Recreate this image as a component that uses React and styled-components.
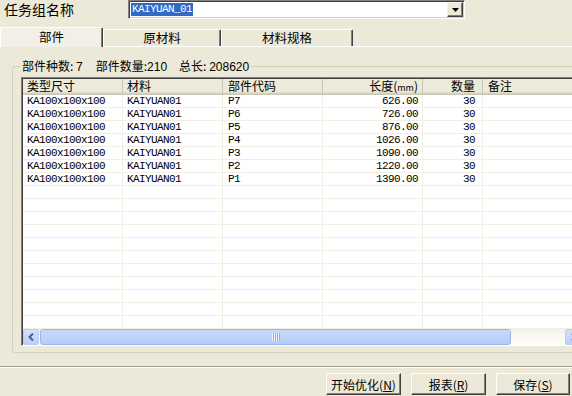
import React from "react";
import styled, { createGlobalStyle } from "styled-components";

const CJK = `"Noto Sans CJK SC", "Liberation Sans", sans-serif`;
const MONO = `"Liberation Mono", "Noto Sans CJK SC", monospace`;

const GlobalStyle = createGlobalStyle`
  html, body {
    margin: 0;
    padding: 0;
    background: #ece9d8;
  }
  body {
    font-family: ${CJK};
    font-size: 12px;
    color: #000;
  }
`;

const Window = styled.div`
  width: 572px;
  height: 396px;
  overflow: hidden;
  display: flex;
  flex-direction: column;
  background: #ece9d8;
`;

const TopRow = styled.div`
  display: flex;
  align-items: flex-start;
  height: 20px;
  flex: none;
`;

const FieldLabel = styled.div`
  width: 128px;
  padding: 1px 0 0 4px;
  box-sizing: border-box;
  font-size: 14px;
  line-height: 17px;
`;

const Combo = styled.div`
  width: 337px;
  height: 19px;
  box-sizing: border-box;
  background: #fff;
  border: 1px solid;
  border-color: #808080 #fff #fff #808080;
  box-shadow: inset 1px 1px #404040, inset -1px -1px #d4d0c8;
  display: flex;
  align-items: center;
  padding: 0 1px 0 2px;
`;

const Selected = styled.span`
  background: #316ac5;
  color: #fff;
  font-family: ${MONO};
  font-size: 11px;
  letter-spacing: -0.6px;
  line-height: 13px;
  padding: 0 1px;
`;

const DropButton = styled.div`
  margin-left: auto;
  width: 16px;
  height: 15px;
  box-sizing: border-box;
  background: #ece9d8;
  border: 1px solid;
  border-color: #f4f3ee #404040 #404040 #f4f3ee;
  box-shadow: inset -1px -1px #808080;
  display: flex;
  align-items: center;
  justify-content: center;
`;

const TabStrip = styled.div`
  display: flex;
  align-items: flex-end;
  height: 20px;
  flex: none;
  margin-top: 6px;
  position: relative;
  z-index: 1;
`;

const Tab = styled.div`
  width: ${(p) => p.$w}px;
  height: ${(p) => (p.$active ? 20 : 17)}px;
  box-sizing: border-box;
  background: ${(p) => (p.$active ? "#f1efe6" : "#ece9d8")};
  border-top: 1px solid #fff;
  border-left: 1px solid #fff;
  border-right: 1px solid #404040;
  box-shadow: inset -1px 0 #808080;
  border-radius: 2px 2px 0 0;
  margin-bottom: ${(p) => (p.$active ? -1 : 0)}px;
  text-align: center;
  font-size: 12.5px;
  line-height: ${(p) => (p.$active ? 18 : 15)}px;
`;

const TabPanel = styled.div`
  flex: 1;
  min-height: 0;
  border-top: 1px solid #fff;
  padding: 12px 0 13px 12px;
  overflow: hidden;
`;

const GroupBox = styled.fieldset`
  margin: 0;
  padding: 3px 0 6px 8px;
  width: 600px;
  height: 100%;
  box-sizing: border-box;
  border: 1px solid #d0d0bf;
  border-radius: 3px;
  display: flex;
  flex-direction: column;
  min-width: 0;
`;

const Summary = styled.legend`
  margin-left: -1px;
  padding: 0 2px;
  font-size: 12px;
  line-height: 14px;
  white-space: pre;
  display: flex;
`;

const Stat = styled.span`
  margin-right: ${(p) => p.$gap}px;
`;

const Num = styled.span`
  font-family: "Liberation Sans", sans-serif;
  font-size: 12px;
`;

const ListView = styled.div`
  flex: 1;
  min-height: 0;
  width: 558px;
  display: flex;
  flex-direction: column;
  background: #fff;
  border: 1px solid;
  border-color: #808080 #fff #fff #808080;
  box-shadow: inset 1px 1px #404040;
  padding: 1px 0 0 1px;
  overflow: hidden;
`;

const HeaderRow = styled.div`
  display: flex;
  height: 16px;
  flex: none;
  background: #ebeadb;
  box-shadow: inset 0 -1px #cbc7b8, inset 0 -2px #d6d2c2, inset 0 -3px #e2decd;
`;

const HeaderCell = styled.div`
  width: ${(p) => p.$w}px;
  flex: none;
  box-sizing: border-box;
  padding: 0 ${(p) => p.$pr}px 0 ${(p) => p.$pl}px;
  text-align: ${(p) => p.$align};
  border-right: 1px solid #c7c5b2;
  font-size: 12px;
  line-height: 14px;
  white-space: nowrap;
`;

const Small = styled.span`
  font-size: 9px;
`;

const Body = styled.div`
  flex: 1;
  min-height: 0;
  overflow: hidden;
`;

const Row = styled.div`
  display: flex;
  height: 13px;
  box-sizing: border-box;
  border-bottom: 1px solid #f1efe2;
`;

const Cell = styled.div`
  width: ${(p) => p.$w}px;
  flex: none;
  box-sizing: border-box;
  padding: 0 ${(p) => p.$pr}px 0 ${(p) => p.$pl}px;
  text-align: ${(p) => p.$align};
  border-right: 1px solid #f1efe2;
  font-family: ${MONO};
  font-size: 11px;
  letter-spacing: -0.6px;
  line-height: 12px;
  white-space: nowrap;
  overflow: hidden;
`;

const ScrollBar = styled.div`
  display: flex;
  height: 16px;
  flex: none;
  background: linear-gradient(#f3f1ec, #fefefb);
`;

const ArrowButton = styled.div`
  width: 16px;
  height: 16px;
  box-sizing: border-box;
  flex: none;
  border: 1px solid #b8ccf6;
  border-radius: 2px;
  background: linear-gradient(#d3e0fd, #bccffa);
  display: flex;
  align-items: center;
  justify-content: center;
`;

const Thumb = styled.div`
  width: ${(p) => p.$w}px;
  margin-left: 1px;
  height: 16px;
  box-sizing: border-box;
  border: 1px solid #99b5f2;
  border-radius: 3px;
  background: linear-gradient(#c9d9fc, #b6cbf8);
  display: flex;
  align-items: center;
  justify-content: center;
  flex: none;
`;

const Track = styled.div`
  flex: 1;
`;

const Footer = styled.div`
  flex: none;
  height: 30px;
  box-sizing: border-box;
  border-top: 1px solid #9d9b90;
  box-shadow: inset 0 1px #fff;
  display: flex;
  justify-content: flex-end;
  align-items: flex-start;
  gap: 10px;
  padding: 6px 2px 0 0;
`;

const Button = styled.button`
  width: ${(p) => p.$w}px;
  height: 22px;
  box-sizing: border-box;
  background: #ece9d8;
  border: 1px solid;
  border-color: #fff #404040 #404040 #fff;
  box-shadow: inset -1px -1px #808080;
  font-family: ${CJK};
  font-size: 12px;
  color: #000;
  padding: 0;
  u {
    text-underline-offset: 1px;
  }
`;

const columns = [
  { key: "type", label: "类型尺寸", w: 100, align: "left", pl: 4, pr: 2 },
  { key: "mat", label: "材料", w: 100, align: "left", pl: 4, pr: 2 },
  { key: "code", label: "部件代码", w: 100, align: "left", pl: 5, pr: 2 },
  {
    key: "len",
    label: (
      <>
        长度(<Small>mm</Small>)
      </>
    ),
    w: 100,
    align: "right",
    pl: 2,
    pr: 4,
  },
  { key: "qty", label: "数量", w: 60, align: "right", pl: 2, pr: 7 },
  { key: "note", label: "备注", w: 100, align: "left", pl: 5, pr: 2 },
];

const parts = [
  ["P7", "626.00"],
  ["P6", "726.00"],
  ["P5", "876.00"],
  ["P4", "1026.00"],
  ["P3", "1090.00"],
  ["P2", "1220.00"],
  ["P1", "1390.00"],
].map(([code, len]) => ({
  type: "KA100x100x100",
  mat: "KAIYUAN01",
  code,
  len,
  qty: "30",
  note: "",
}));

const rows = [...parts, ...Array.from({ length: 14 }, () => ({}))];

const Chevron = ({ dir }) => (
  <svg width="7" height="8" viewBox="0 0 7 8">
    <path
      d={dir === "left" ? "M5 0.5 L1.5 4 L5 7.5" : "M2 0.5 L5.5 4 L2 7.5"}
      fill="none"
      stroke="#4d6185"
      strokeWidth="2"
    />
  </svg>
);

const Grip = () => (
  <svg width="8" height="8" viewBox="0 0 8 8">
    {[0, 2, 4, 6].map((x) => (
      <rect key={x} x={x} y="0" width="1" height="8" fill="#eef4fe" />
    ))}
    {[1, 3, 5, 7].map((x) => (
      <rect key={x} x={x} y="0" width="1" height="8" fill="#8cb0f8" />
    ))}
  </svg>
);

export default function App() {
  return (
    <>
      <GlobalStyle />
      <Window>
        <TopRow>
          <FieldLabel>任务组名称</FieldLabel>
          <Combo>
            <Selected>KAIYUAN_01</Selected>
            <DropButton>
              <svg width="7" height="4" viewBox="0 0 7 4">
                <path d="M0 0 H7 L3.5 4 Z" fill="#000" />
              </svg>
            </DropButton>
          </Combo>
        </TopRow>
        <TabStrip>
          <Tab $w={103} $active>部件</Tab>
          <Tab $w={118}>原材料</Tab>
          <Tab $w={132}>材料规格</Tab>
        </TabStrip>
        <TabPanel>
          <GroupBox>
            <Summary>
              <Stat $gap={13}>
                部件种数: <Num>7</Num>
              </Stat>
              <Stat $gap={12}>
                部件数量:<Num>210</Num>
              </Stat>
              <Stat $gap={0}>
                总长: <Num>208620</Num>
              </Stat>
            </Summary>
            <ListView>
              <HeaderRow>
                {columns.map((c) => (
                  <HeaderCell key={c.key} $w={c.w} $align={c.align} $pl={c.pl} $pr={c.pr}>
                    {c.label}
                  </HeaderCell>
                ))}
              </HeaderRow>
              <Body>
                {rows.map((r, i) => (
                  <Row key={i}>
                    {columns.map((c) => (
                      <Cell key={c.key} $w={c.w} $align={c.align} $pl={c.pl} $pr={c.pr}>
                        {r[c.key]}
                      </Cell>
                    ))}
                  </Row>
                ))}
              </Body>
              <ScrollBar>
                <ArrowButton>
                  <Chevron dir="left" />
                </ArrowButton>
                <Thumb $w={471}>
                  <Grip />
                </Thumb>
                <Track />
                <ArrowButton>
                  <Chevron dir="right" />
                </ArrowButton>
              </ScrollBar>
            </ListView>
          </GroupBox>
        </TabPanel>
        <Footer>
          <Button $w={75}>
            开始优化(<u>N</u>)
          </Button>
          <Button $w={75}>
            报表(<u>R</u>)
          </Button>
          <Button $w={74}>
            保存(<u>S</u>)
          </Button>
        </Footer>
      </Window>
    </>
  );
}
